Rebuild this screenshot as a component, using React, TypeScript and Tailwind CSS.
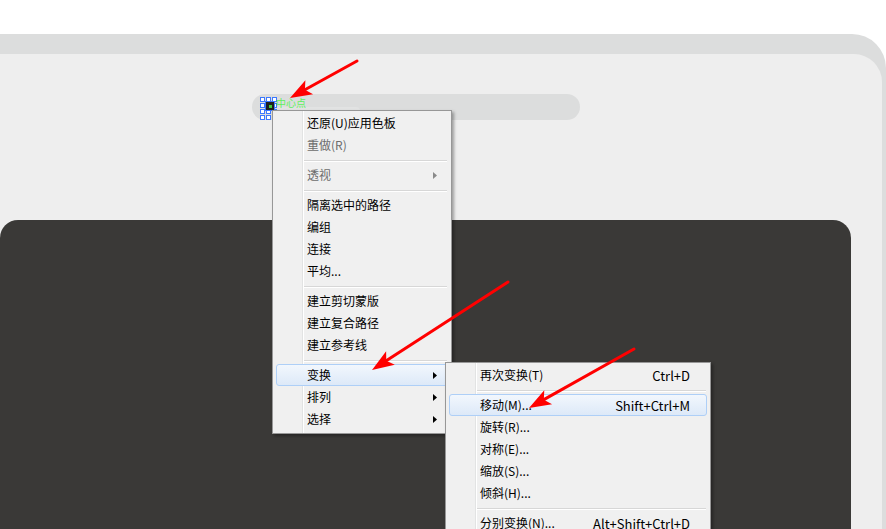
import React from "react";

type Item =
  | { type: "sep" }
  | { type: "item"; label: string; disabled?: boolean; sub?: boolean; active?: boolean; shortcut?: string };

const menu1: Item[] = [
  { type: "item", label: "还原(U)应用色板" },
  { type: "item", label: "重做(R)", disabled: true },
  { type: "sep" },
  { type: "item", label: "透视", disabled: true, sub: true },
  { type: "sep" },
  { type: "item", label: "隔离选中的路径" },
  { type: "item", label: "编组" },
  { type: "item", label: "连接" },
  { type: "item", label: "平均..." },
  { type: "sep" },
  { type: "item", label: "建立剪切蒙版" },
  { type: "item", label: "建立复合路径" },
  { type: "item", label: "建立参考线" },
  { type: "sep" },
  { type: "item", label: "变换", sub: true, active: true },
  { type: "item", label: "排列", sub: true },
  { type: "item", label: "选择", sub: true },
];

const menu2: Item[] = [
  { type: "item", label: "再次变换(T)", shortcut: "Ctrl+D" },
  { type: "sep" },
  { type: "item", label: "移动(M)...", shortcut: "Shift+Ctrl+M", active: true },
  { type: "item", label: "旋转(R)..." },
  { type: "item", label: "对称(E)..." },
  { type: "item", label: "缩放(S)..." },
  { type: "item", label: "倾斜(H)..." },
  { type: "sep" },
  { type: "item", label: "分别变换(N)...", shortcut: "Alt+Shift+Ctrl+D" },
];

function Triangle({ gray }: { gray?: boolean }) {
  return (
    <svg width="4" height="7" viewBox="0 0 4 7" className="shrink-0">
      <path d="M0 0 L4 3.5 L0 7 Z" fill={gray ? "#8a8a8a" : "#000"} />
    </svg>
  );
}

function Menu({ items, className }: { items: Item[]; className: string }) {
  return (
    <div
      className={`absolute border border-[#979797] bg-[#f0f0f0] shadow-[2px_2px_3px_rgba(0,0,0,0.35)] ${className}`}
    >
      <div className="absolute top-0 bottom-0 left-[29px] w-px bg-[#e2e3e3]" />
      <div className="absolute top-0 bottom-0 left-[30px] w-px bg-white" />
      <div className="relative flex flex-col">
        {items.map((it, i) =>
          it.type === "sep" ? (
            <div key={i} className="h-[8px] flex flex-col pt-[4px] pl-[31px] pr-[4px]">
              <div className="h-px bg-[#d7d7d7]" />
              <div className="h-px bg-white" />
            </div>
          ) : (
            <div
              key={i}
              className={`mx-[3px] h-[22px] flex items-center pl-[30px] rounded-[3px] border ${
                it.active
                  ? "border-[#aecff7] bg-gradient-to-b from-[#f2f7fd] to-[#dde9f8]"
                  : "border-transparent"
              } ${it.disabled ? "text-[#6d6d6d]" : "text-black"}`}
            >
              <span className="flex-1 whitespace-nowrap">{it.label}</span>
              {it.shortcut && <span className="whitespace-nowrap pr-[16px] text-[13px]">{it.shortcut}</span>}
              {it.sub && (
                <span className="pr-[10px] flex items-center">
                  <Triangle gray={it.disabled} />
                </span>
              )}
            </div>
          )
        )}
      </div>
    </div>
  );
}

function Arrow({ x1, y1, x2, y2 }: { x1: number; y1: number; x2: number; y2: number }) {
  const dx = x2 - x1;
  const dy = y2 - y1;
  const len = Math.sqrt(dx * dx + dy * dy);
  const ux = dx / len;
  const uy = dy / len;
  const hl = 22;
  const hw = 8;
  const bx = x2 - ux * hl;
  const by = y2 - uy * hl;
  const px = -uy;
  const py = ux;
  const pts = `${x2},${y2} ${bx + px * hw},${by + py * hw} ${bx + ux * 5},${by + uy * 5} ${bx - px * hw},${by - py * hw}`;
  return (
    <g>
      <line x1={x1} y1={y1} x2={bx + ux * 6} y2={by + uy * 6} stroke="#ff0000" strokeWidth="3" strokeLinecap="round" />
      <polygon points={pts} fill="#ff0000" />
    </g>
  );
}

function Handles() {
  const cells = Array.from({ length: 12 });
  return (
    <div className="absolute left-[260px] top-[97px] grid grid-cols-3 gap-[1px]">
      {cells.map((_, i) => (
        <div key={i} className="w-[5px] h-[5px] border border-[#3c78ff] bg-white" />
      ))}
    </div>
  );
}

export default function App() {
  return (
    <div
      className="relative w-[886px] h-[529px] overflow-hidden bg-white text-[12px] leading-none"
      style={{ fontFamily: '"Noto Sans CJK SC", "Noto Sans", sans-serif' }}
    >
      <div className="h-[34px]" />
      <div className="h-[495px] bg-[#dcdddd] rounded-tr-[34px] pt-[20px] pr-[4px]">
        <div className="h-full bg-[#eeeeee] rounded-tr-[28px] pt-[40px] flex flex-col">
          <div className="ml-[252px] w-[328px] h-[26px] rounded-full bg-[#dcdddd] flex items-end pl-[21px]">
            <div className="w-[87px] h-[13px] rounded-t-[4px] bg-[#e2e3e3]" />
          </div>
          <div className="mt-[100px] w-[851px] flex-1 bg-[#3a3937] rounded-t-[18px]" />
        </div>
      </div>

      <Handles />
      <div className="absolute left-[265px] top-[101px] w-[10px] h-[10px] bg-[#1e1e1e] border border-[#3c78ff] flex items-center justify-center">
        <div className="w-[3px] h-[3px] bg-[#3ccc3c]" />
      </div>
      <div className="absolute left-[276px] top-[97px] text-[10px] leading-[12px] text-[#5ff05f] whitespace-nowrap">
        中心点
      </div>

      <Menu items={menu1} className="left-[272px] top-[110px] w-[180px] h-[324px] pt-[1px]" />
      <Menu items={menu2} className="left-[445px] top-[362px] w-[266px] h-[200px] pt-[1px]" />

      <svg className="absolute inset-0 pointer-events-none" width="886" height="529">
        <Arrow x1={357} y1={61} x2={290} y2={98} />
        <Arrow x1={508} y1={282} x2={372} y2={370} />
        <Arrow x1={634} y1={349} x2={529} y2={408} />
      </svg>
    </div>
  );
}
